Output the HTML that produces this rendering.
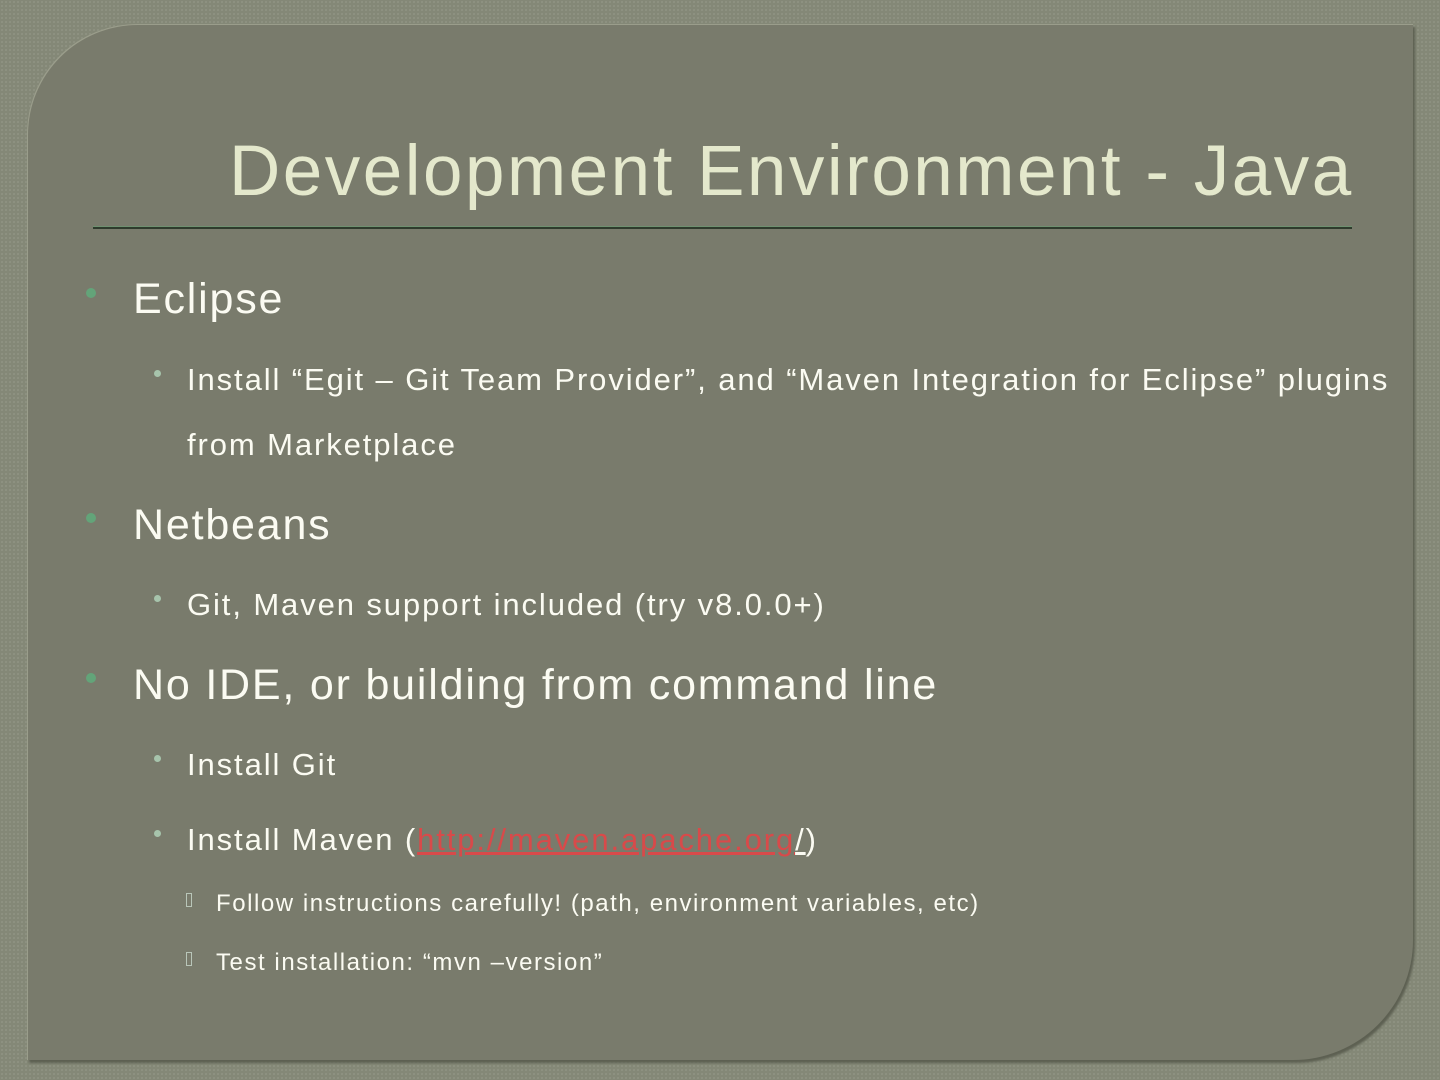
<!DOCTYPE html>
<html><head><meta charset="utf-8"><style>
html,body{margin:0;padding:0}
body{width:1440px;height:1080px;position:relative;overflow:hidden;background:#848877;font-family:"Liberation Sans",sans-serif;
background-image:radial-gradient(circle,#8e9282 0.9px,transparent 1.2px);background-size:4px 4px}
.panel{position:absolute;left:27px;top:24px;width:1386px;height:1036px;background:#797b6c;border-radius:110px 0 120px 0;
box-shadow:inset 1px 1px 0 #9a9d8b, 2px 3px 2px #5d6052}
.t{position:absolute;white-space:nowrap;line-height:1;color:#fbfbf2}
.title{left:229px;top:136px;font-size:71px;color:#e4e8cc;letter-spacing:2.5px}
.rule{position:absolute;left:93px;top:226px;width:1259px;height:2px;background:#2e3b2c;border-top:1px solid #6f9070}
.l1{font-size:43px;letter-spacing:1.8px}
.l2{font-size:31px;letter-spacing:1.9px}
.l3{font-size:24px;letter-spacing:1.55px}
.b1{position:absolute;width:10px;height:10px;border-radius:50%;background:#63a479}
.b2{position:absolute;width:7px;height:7px;border-radius:50%;background:#a7c4ac}
.b3{position:absolute;width:6px;height:14px;border:1px solid #b9c6b9;box-sizing:border-box}
a{color:#d84a4a;text-decoration:underline}
</style></head><body>
<div class="panel"></div>
<div class="t title">Development Environment - Java</div>
<div class="rule"></div>

<div class="b1" style="left:86px;top:288px"></div>
<div class="t l1" style="left:133px;top:278px">Eclipse</div>

<div class="b2" style="left:154px;top:370px"></div>
<div class="t l2" style="left:187px;top:364px">Install “Egit – Git Team Provider”, and “Maven Integration for Eclipse” plugins</div>
<div class="t l2" style="left:187px;top:429px">from Marketplace</div>

<div class="b1" style="left:86px;top:513px"></div>
<div class="t l1" style="left:133px;top:504px">Netbeans</div>

<div class="b2" style="left:154px;top:595px"></div>
<div class="t l2" style="left:187px;top:589px">Git, Maven support included (try v8.0.0+)</div>

<div class="b1" style="left:86px;top:673px"></div>
<div class="t l1" style="left:133px;top:664px">No IDE, or building from command line</div>

<div class="b2" style="left:154px;top:755px"></div>
<div class="t l2" style="left:187px;top:749px">Install Git</div>

<div class="b2" style="left:154px;top:830px"></div>
<div class="t l2" style="left:187px;top:824px">Install Maven (<a>http://maven.apache.org</a><span style="text-decoration:underline">/</span>)</div>

<div class="b3" style="left:186px;top:893px"></div>
<div class="t l3" style="left:216px;top:892px">Follow instructions carefully! (path, environment variables, etc)</div>

<div class="b3" style="left:186px;top:952px"></div>
<div class="t l3" style="left:216px;top:951px">Test installation: “mvn –version”</div>
</body></html>
